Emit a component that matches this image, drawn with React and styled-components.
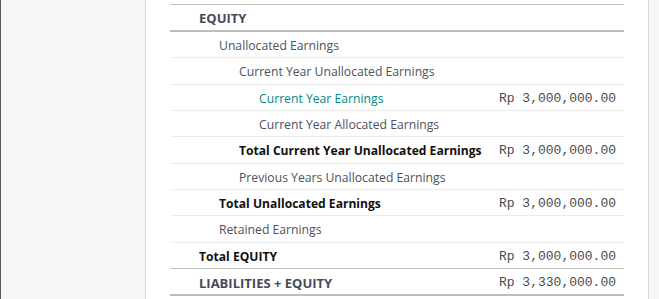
import React from 'react';
import styled, { createGlobalStyle } from 'styled-components';

const GlobalStyle = createGlobalStyle`
  html, body {
    margin: 0;
    padding: 0;
    background: #f5f6f8;
  }
  body {
    font-family: "Open Sans", "Noto Sans", sans-serif;
  }
`;

const rows = [
  { label: 'Unallocated Earnings', level: 1 },
  { label: 'Current Year Unallocated Earnings', level: 2 },
  { label: 'Current Year Earnings', level: 3, amount: 'Rp 3,000,000.00', link: true },
  { label: 'Current Year Allocated Earnings', level: 3 },
  { label: 'Total Current Year Unallocated Earnings', level: 2, amount: 'Rp 3,000,000.00', total: true },
  { label: 'Previous Years Unallocated Earnings', level: 2 },
  { label: 'Total Unallocated Earnings', level: 1, amount: 'Rp 3,000,000.00', total: true },
  { label: 'Retained Earnings', level: 1 },
  { label: 'Total EQUITY', level: 0, amount: 'Rp 3,000,000.00', total: true, edge: 'mid' },
  { label: 'LIABILITIES + EQUITY', level: 0, amount: 'Rp 3,330,000.00', grand: true, edge: 'end' },
];

const App = () => {
  return (
    <Page>
      <GlobalStyle />
      <Sheet>
        <Report>
          <HeaderRow>
            <Label $level={0} $kind="head">EQUITY</Label>
          </HeaderRow>
          {rows.map((r) => (
            <Row key={r.label} $edge={r.edge}>
              <Label
                $level={r.level}
                $kind={r.grand ? 'head' : r.total ? 'total' : r.link ? 'link' : 'plain'}
              >
                {r.label}
              </Label>
              {r.amount && <Amount>{r.amount}</Amount>}
            </Row>
          ))}
        </Report>
      </Sheet>
    </Page>
  );
};

const Page = styled.div`
  display: flex;
  height: 299px;
  border-left: 1px solid #5a5a5a;
  background: #f5f6f8;
  overflow: hidden;
`;

const Sheet = styled.div`
  box-sizing: border-box;
  margin-left: 144px;
  width: 504px;
  background: #fff;
  border-left: 1px solid #d6d8dc;
  border-right: 1px solid #d6d8dc;
  padding: 4px 24px 0 24px;
`;

const Report = styled.div`
  display: flex;
  flex-direction: column;
`;

const HeaderRow = styled.div`
  display: flex;
  align-items: center;
  height: 28px;
  box-sizing: border-box;
  border-top: 1px solid #bdbdbd;
  border-bottom: 2px solid #bdbdbd;
`;

const Row = styled.div`
  display: flex;
  align-items: center;
  justify-content: space-between;
  box-sizing: border-box;
  padding-top: 2px;
  height: ${(p) => (p.$edge === 'end' ? '27.33px' : '26.33px')};
  border-bottom: ${(p) =>
    p.$edge === 'end'
      ? '2px solid #bdbdbd'
      : p.$edge === 'mid'
      ? '1px solid #bdbdbd'
      : '1px solid #ececec'};
`;

const colors = {
  head: '#454a5a',
  total: '#111111',
  link: '#018a87',
  plain: '#4d525c',
};

const sizes = {
  head: '13px',
  total: '12.1px',
  link: '12.2px',
  plain: '12.2px',
};

const Label = styled.span`
  padding-left: ${(p) => 29 + p.$level * 20}px;
  font-size: ${(p) => sizes[p.$kind]};
  font-weight: ${(p) => (p.$kind === 'head' || p.$kind === 'total' ? 700 : 400)};
  color: ${(p) => colors[p.$kind]};
  white-space: nowrap;
`;

const Amount = styled.span`
  padding-right: 8px;
  font-family: "Liberation Mono", "Courier New", monospace;
  font-size: 13px;
  color: #4a4a4a;
  white-space: nowrap;
`;

export default App;
